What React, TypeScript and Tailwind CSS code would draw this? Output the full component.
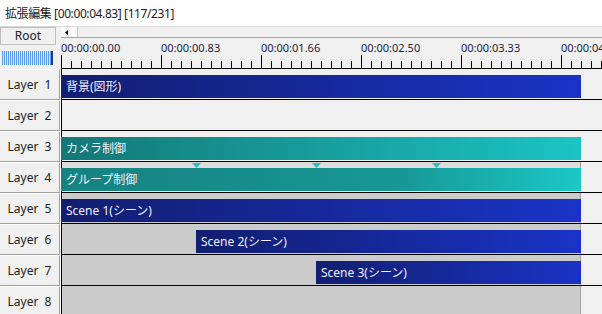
import React from 'react'

type Clip = { left: number; width: number; label: string; tone: 'blue' | 'teal' | 'teal2' }
type Row = { name: string; bg: 'plain' | 'group' | 'scene'; clips: Clip[] }

const rows: Row[] = [
  { name: 'Layer  1', bg: 'plain', clips: [{ left: 0, width: 520, label: '背景(図形)', tone: 'blue' }] },
  { name: 'Layer  2', bg: 'plain', clips: [] },
  { name: 'Layer  3', bg: 'plain', clips: [{ left: 0, width: 520, label: 'カメラ制御', tone: 'teal' }] },
  { name: 'Layer  4', bg: 'group', clips: [{ left: 0, width: 520, label: 'グループ制御', tone: 'teal2' }] },
  { name: 'Layer  5', bg: 'scene', clips: [{ left: 0, width: 520, label: 'Scene 1(シーン)', tone: 'blue' }] },
  { name: 'Layer  6', bg: 'scene', clips: [{ left: 135, width: 385, label: 'Scene 2(シーン)', tone: 'blue' }] },
  { name: 'Layer  7', bg: 'scene', clips: [{ left: 255, width: 265, label: 'Scene 3(シーン)', tone: 'blue' }] },
  { name: 'Layer  8', bg: 'scene', clips: [] },
]

const marks = ['00:00:00.00', '00:00:00.83', '00:00:01.66', '00:00:02.50', '00:00:03.33', '00:00:04.16']

const toneClass = {
  blue: 'bg-[linear-gradient(90deg,#121e70,#1a33c6)]',
  teal: 'bg-[linear-gradient(90deg,#137876,#1bc4c4)]',
  teal2: 'bg-[linear-gradient(90deg,#158280,#179895_65%,#1bc7c7)]',
}

function Ruler() {
  const ticks = Array.from({ length: 55 }, (_, i) => i * 10)
  return (
    <div className="relative h-[31px] border-b border-black overflow-hidden">
      {marks.map((m, i) => (
        <span
          key={m}
          className="absolute top-[3px] text-[11px] leading-[13px] text-[#1c1c3a] whitespace-nowrap"
          style={{ left: i * 100 }}
        >
          {m}
        </span>
      ))}
      <svg className="absolute left-0 bottom-0" width="541" height="14">
        {ticks.map((x) => (
          <rect key={x} x={x} y={x % 100 === 0 ? 1 : 7} width="1" height={x % 100 === 0 ? 13 : 7} fill="#000" />
        ))}
      </svg>
    </div>
  )
}

function Track({ row }: { row: Row }) {
  return (
    <div className="relative flex-1 h-[31px] border-b border-black overflow-hidden">
      {row.bg === 'scene' && (
        <div className="absolute top-0 left-0 h-full w-[520px] bg-[#cbcbcb] border-r border-[#a0a0a0]" />
      )}
      {row.bg === 'group' && (
        <div className="absolute top-0 left-0 h-[6px] w-[520px] bg-[#dcdcdc] border-r border-[#a0a0a0]">
          {[131, 251, 371].map((x) => (
            <svg key={x} className="absolute top-[1px]" style={{ left: x }} width="9" height="5">
              <polygon points="0,0 9,0 4.5,5" fill="#1cc0c0" />
            </svg>
          ))}
        </div>
      )}
      <div className="absolute top-0 left-0 h-full w-px bg-black" />
      {row.clips.map((c) => (
        <div
          key={c.label}
          className={`absolute top-[6px] h-[23px] flex items-center pl-[5px] pt-px text-[12px] text-[#eef0ff] whitespace-nowrap ${toneClass[c.tone]}`}
          style={{ left: c.left, width: c.width }}
        >
          {c.label}
        </div>
      ))}
    </div>
  )
}

export default function App() {
  return (
    <div className="w-[602px] h-[314px] overflow-hidden bg-[#f0f0f0] text-[#222] font-['Noto_Sans','Noto_Sans_CJK_JP',sans-serif]">
      <div className="h-[27px] bg-white border-b border-[#dadada] flex items-center pt-px px-[5px] text-[12px] tracking-[-0.4px] text-[#1a1a1a]">
        拡張編集 [00:00:04.83] [117/231]
      </div>

      <div className="flex h-[42px]">
        <div className="w-[61px] shrink-0">
          <div className="h-[18px] w-[56px] border border-[#bcbcbc] bg-[#f0f0f0] flex items-center justify-center text-[12px]">
            Root
          </div>
          <div className="mt-[6px] ml-[2px] h-[14px] w-[51px] flex">
            <div className="flex-1 bg-[repeating-linear-gradient(90deg,#5b9fe8_0_1px,#d6e7fb_1px_2px)]" />
            <div className="w-[2px] bg-[#1f3c95]" />
          </div>
        </div>
        <div className="flex-1 flex flex-col">
          <div className="h-[11px] border-b border-[#a0a0a0] bg-[#f0f0f0] flex">
            <div className="w-[17px] h-full bg-[#f8f8f8] border-r border-[#c4c4c4] flex items-center pl-[4px]">
              <svg width="3" height="5">
                <polygon points="3,0 3,5 0,2.5" fill="#000" />
              </svg>
            </div>
          </div>
          <Ruler />
        </div>
      </div>

      {rows.map((row) => (
        <div key={row.name} className="flex">
          <div className="w-[60px] h-[31px] shrink-0 border-t border-t-white border-b border-b-[#a0a0a0] border-r border-r-[#a0a0a0] flex items-center justify-center text-[12px] whitespace-pre">
            {row.name}
          </div>
          <div className="w-px h-[31px] bg-white" />
          <Track row={row} />
        </div>
      ))}
    </div>
  )
}
